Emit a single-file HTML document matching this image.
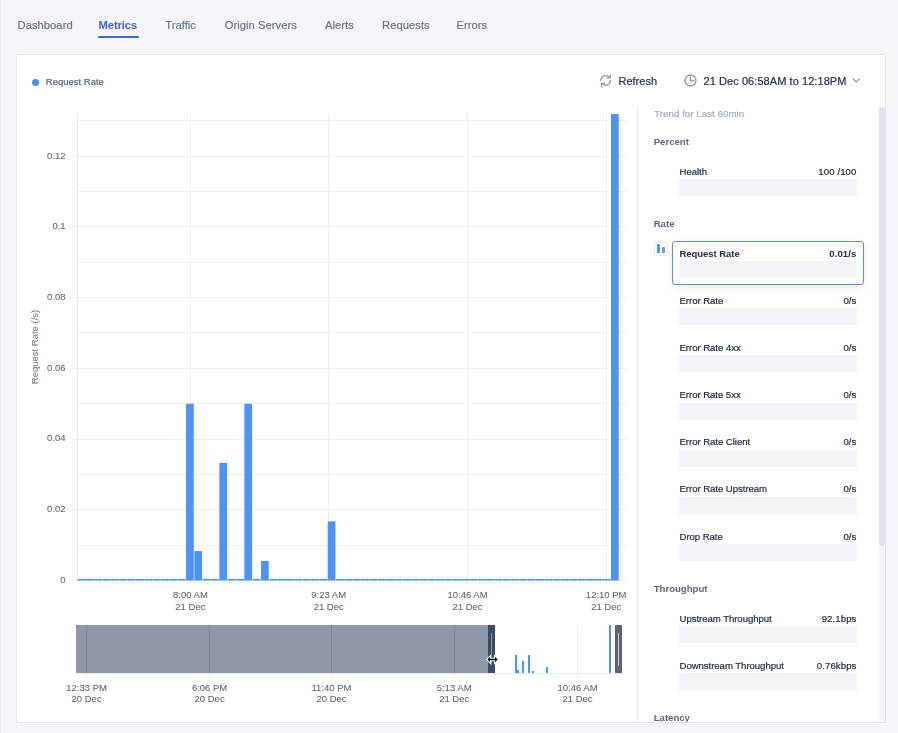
<!DOCTYPE html><html><head><meta charset="utf-8"><style>
html,body{margin:0;padding:0;width:898px;height:733px;overflow:hidden;background:#f4f6f9;font-family:"Liberation Sans", sans-serif;}
#root{position:absolute;left:0;top:0;width:898px;height:733px;will-change:transform;}
.t{position:absolute;white-space:nowrap;-webkit-font-smoothing:antialiased;}
.r{position:absolute;}
svg{position:absolute;overflow:visible;}
</style></head><body><div id="root">
<div class="r" style="left:0px;top:0px;width:1px;height:733px;background:#edf0f3;"></div>
<div class="t" style="left:17.5px;top:19.82px;font-size:11.2px;line-height:11.2px;color:#6b7386;font-weight:400;letter-spacing:0.05px;-webkit-text-stroke:0.2px #6b7386;">Dashboard</div>
<div class="t" style="left:98.6px;top:19.82px;font-size:11.2px;line-height:11.2px;color:#3d63dc;font-weight:700;letter-spacing:-0.1px;">Metrics</div>
<div class="t" style="left:165.2px;top:19.82px;font-size:11.2px;line-height:11.2px;color:#6b7386;font-weight:400;letter-spacing:0.05px;-webkit-text-stroke:0.2px #6b7386;">Traffic</div>
<div class="t" style="left:224.7px;top:19.82px;font-size:11.2px;line-height:11.2px;color:#6b7386;font-weight:400;letter-spacing:0.05px;-webkit-text-stroke:0.2px #6b7386;">Origin Servers</div>
<div class="t" style="left:325px;top:19.82px;font-size:11.2px;line-height:11.2px;color:#6b7386;font-weight:400;letter-spacing:0.05px;-webkit-text-stroke:0.2px #6b7386;">Alerts</div>
<div class="t" style="left:382.1px;top:19.82px;font-size:11.2px;line-height:11.2px;color:#6b7386;font-weight:400;letter-spacing:0.05px;-webkit-text-stroke:0.2px #6b7386;">Requests</div>
<div class="t" style="left:456.4px;top:19.82px;font-size:11.2px;line-height:11.2px;color:#6b7386;font-weight:400;letter-spacing:0.05px;-webkit-text-stroke:0.2px #6b7386;">Errors</div>
<div class="r" style="left:98px;top:36px;width:41px;height:2px;background:#3f66d8;border-radius:1px;"></div>
<div class="r" style="left:16px;top:54px;width:868px;height:667px;background:#fff;border:1px solid #e2e6ee;border-radius:2px;"></div>
<div class="r" style="left:32px;top:79px;width:7px;height:7px;border-radius:50%;background:#4a8cef;"></div>
<div class="t" style="left:45.8px;top:77.36px;font-size:9.5px;line-height:9.5px;color:#596276;font-weight:400;letter-spacing:0px;-webkit-text-stroke:0.2px #596276;">Request Rate</div>
<svg style="left:596px;top:70px" width="20" height="20" viewBox="0 0 20 20" fill="none" stroke="#8d95a8" stroke-width="1.25" stroke-linecap="round" stroke-linejoin="round"><path d="M4.7 10.4 A5 5 0 0 1 13.4 7.4"/><polyline points="14.2,5 14.2,7.9 11,7.9"/><path d="M14.5 10.5 A5 5 0 0 1 5.9 13.6"/><polyline points="5.5,16.6 5.5,13.4 8.7,13.4"/></svg>
<div class="t" style="left:618.5px;top:75.99px;font-size:11px;line-height:11px;color:#252f4b;font-weight:400;letter-spacing:0px;-webkit-text-stroke:0.2px #252f4b;">Refresh</div>
<svg style="left:680px;top:70px" width="20" height="20" viewBox="0 0 20 20" fill="none" stroke="#8a93a6" stroke-width="1.3" stroke-linecap="round" stroke-linejoin="round"><circle cx="10.5" cy="10.5" r="5.5"/><polyline points="10.4,7.3 10.4,10.5 13.7,10.5"/></svg>
<div class="t" style="left:703.5px;top:75.99px;font-size:11px;line-height:11px;color:#252f4b;font-weight:400;letter-spacing:0.07px;-webkit-text-stroke:0.2px #252f4b;">21 Dec 06:58AM to 12:18PM</div>
<svg style="left:850px;top:75px" width="12" height="10" viewBox="0 0 12 10" fill="none" stroke="#8a93a6" stroke-width="1.1" stroke-linecap="round" stroke-linejoin="round"><polyline points="3.2,4 6.2,7 9.2,4"/></svg>
<div class="r" style="left:77px;top:580px;width:549px;height:1px;background:#edeff3;"></div>
<div class="r" style="left:77px;top:545px;width:549px;height:1px;background:#edeff3;"></div>
<div class="r" style="left:77px;top:509px;width:549px;height:1px;background:#edeff3;"></div>
<div class="r" style="left:77px;top:474px;width:549px;height:1px;background:#edeff3;"></div>
<div class="r" style="left:77px;top:439px;width:549px;height:1px;background:#edeff3;"></div>
<div class="r" style="left:77px;top:403px;width:549px;height:1px;background:#edeff3;"></div>
<div class="r" style="left:77px;top:368px;width:549px;height:1px;background:#edeff3;"></div>
<div class="r" style="left:77px;top:332px;width:549px;height:1px;background:#edeff3;"></div>
<div class="r" style="left:77px;top:297px;width:549px;height:1px;background:#edeff3;"></div>
<div class="r" style="left:77px;top:262px;width:549px;height:1px;background:#edeff3;"></div>
<div class="r" style="left:77px;top:226px;width:549px;height:1px;background:#edeff3;"></div>
<div class="r" style="left:77px;top:191px;width:549px;height:1px;background:#edeff3;"></div>
<div class="r" style="left:77px;top:156px;width:549px;height:1px;background:#edeff3;"></div>
<div class="r" style="left:77px;top:120px;width:549px;height:1px;background:#edeff3;"></div>
<div class="r" style="left:72px;top:580px;width:5px;height:1px;background:#edeff3;"></div>
<div class="t" style="right:832.4px;top:574.56px;font-size:9.5px;line-height:9.5px;color:#5f6677;font-weight:400;letter-spacing:0px;-webkit-text-stroke:0.08px #5f6677;">0</div>
<div class="r" style="left:72px;top:509px;width:5px;height:1px;background:#edeff3;"></div>
<div class="t" style="right:832.4px;top:503.89px;font-size:9.5px;line-height:9.5px;color:#5f6677;font-weight:400;letter-spacing:0px;-webkit-text-stroke:0.08px #5f6677;">0.02</div>
<div class="r" style="left:72px;top:439px;width:5px;height:1px;background:#edeff3;"></div>
<div class="t" style="right:832.4px;top:433.22px;font-size:9.5px;line-height:9.5px;color:#5f6677;font-weight:400;letter-spacing:0px;-webkit-text-stroke:0.08px #5f6677;">0.04</div>
<div class="r" style="left:72px;top:368px;width:5px;height:1px;background:#edeff3;"></div>
<div class="t" style="right:832.4px;top:362.56px;font-size:9.5px;line-height:9.5px;color:#5f6677;font-weight:400;letter-spacing:0px;-webkit-text-stroke:0.08px #5f6677;">0.06</div>
<div class="r" style="left:72px;top:297px;width:5px;height:1px;background:#edeff3;"></div>
<div class="t" style="right:832.4px;top:291.89px;font-size:9.5px;line-height:9.5px;color:#5f6677;font-weight:400;letter-spacing:0px;-webkit-text-stroke:0.08px #5f6677;">0.08</div>
<div class="r" style="left:72px;top:226px;width:5px;height:1px;background:#edeff3;"></div>
<div class="t" style="right:832.4px;top:221.22px;font-size:9.5px;line-height:9.5px;color:#5f6677;font-weight:400;letter-spacing:0px;-webkit-text-stroke:0.08px #5f6677;">0.1</div>
<div class="r" style="left:72px;top:156px;width:5px;height:1px;background:#edeff3;"></div>
<div class="t" style="right:832.4px;top:150.56px;font-size:9.5px;line-height:9.5px;color:#5f6677;font-weight:400;letter-spacing:0px;-webkit-text-stroke:0.08px #5f6677;">0.12</div>
<div class="r" style="left:77px;top:114px;width:1px;height:467px;background:#e6e9ef;"></div>
<div class="r" style="left:190px;top:114px;width:1px;height:470px;background:#edeff3;"></div>
<div class="t" style="left:90.4px;width:200px;text-align:center;top:590.36px;font-size:9.5px;line-height:9.5px;color:#5f6677;font-weight:400;letter-spacing:0px;-webkit-text-stroke:0.08px #5f6677;">8:00 AM</div>
<div class="t" style="left:90.4px;width:200px;text-align:center;top:601.76px;font-size:9.5px;line-height:9.5px;color:#5f6677;font-weight:400;letter-spacing:0px;-webkit-text-stroke:0.08px #5f6677;">21 Dec</div>
<div class="r" style="left:328px;top:114px;width:1px;height:470px;background:#edeff3;"></div>
<div class="t" style="left:228.7px;width:200px;text-align:center;top:590.36px;font-size:9.5px;line-height:9.5px;color:#5f6677;font-weight:400;letter-spacing:0px;-webkit-text-stroke:0.08px #5f6677;">9:23 AM</div>
<div class="t" style="left:228.7px;width:200px;text-align:center;top:601.76px;font-size:9.5px;line-height:9.5px;color:#5f6677;font-weight:400;letter-spacing:0px;-webkit-text-stroke:0.08px #5f6677;">21 Dec</div>
<div class="r" style="left:467px;top:114px;width:1px;height:470px;background:#edeff3;"></div>
<div class="t" style="left:367.5px;width:200px;text-align:center;top:590.36px;font-size:9.5px;line-height:9.5px;color:#5f6677;font-weight:400;letter-spacing:0px;-webkit-text-stroke:0.08px #5f6677;">10:46 AM</div>
<div class="t" style="left:367.5px;width:200px;text-align:center;top:601.76px;font-size:9.5px;line-height:9.5px;color:#5f6677;font-weight:400;letter-spacing:0px;-webkit-text-stroke:0.08px #5f6677;">21 Dec</div>
<div class="r" style="left:606px;top:114px;width:1px;height:470px;background:#edeff3;"></div>
<div class="t" style="left:506.20000000000005px;width:200px;text-align:center;top:590.36px;font-size:9.5px;line-height:9.5px;color:#5f6677;font-weight:400;letter-spacing:0px;-webkit-text-stroke:0.08px #5f6677;">12:10 PM</div>
<div class="t" style="left:506.20000000000005px;width:200px;text-align:center;top:601.76px;font-size:9.5px;line-height:9.5px;color:#5f6677;font-weight:400;letter-spacing:0px;-webkit-text-stroke:0.08px #5f6677;">21 Dec</div>
<div class="t" style="left:-5.5px;top:342px;width:80px;text-align:center;font-size:9.5px;line-height:10px;color:#6b7283;transform:rotate(-90deg);transform-origin:40px 5px;">Request Rate (/s)</div>
<svg style="left:0;top:0" width="898" height="733" viewBox="0 0 898 733"><rect x="77.70" y="578.9" width="7.95" height="1.6" fill="#4d92f6"/><rect x="86.03" y="578.9" width="7.95" height="1.6" fill="#4d92f6"/><rect x="94.37" y="578.9" width="7.95" height="1.6" fill="#4d92f6"/><rect x="102.70" y="578.9" width="7.95" height="1.6" fill="#4d92f6"/><rect x="111.03" y="578.9" width="7.95" height="1.6" fill="#4d92f6"/><rect x="119.37" y="578.9" width="7.95" height="1.6" fill="#4d92f6"/><rect x="127.70" y="578.9" width="7.95" height="1.6" fill="#4d92f6"/><rect x="136.03" y="578.9" width="7.95" height="1.6" fill="#4d92f6"/><rect x="144.36" y="578.9" width="7.95" height="1.6" fill="#4d92f6"/><rect x="152.70" y="578.9" width="7.95" height="1.6" fill="#4d92f6"/><rect x="161.03" y="578.9" width="7.95" height="1.6" fill="#4d92f6"/><rect x="169.36" y="578.9" width="7.95" height="1.6" fill="#4d92f6"/><rect x="177.70" y="578.9" width="7.95" height="1.6" fill="#4d92f6"/><rect x="186.03" y="403.80" width="7.7" height="176.70" fill="#4d92f6"/><rect x="194.36" y="551.10" width="7.7" height="29.40" fill="#4d92f6"/><rect x="202.69" y="578.9" width="7.95" height="1.6" fill="#4d92f6"/><rect x="211.03" y="578.9" width="7.95" height="1.6" fill="#4d92f6"/><rect x="219.36" y="462.90" width="7.7" height="117.60" fill="#4d92f6"/><rect x="227.69" y="578.9" width="7.95" height="1.6" fill="#4d92f6"/><rect x="236.03" y="578.9" width="7.95" height="1.6" fill="#4d92f6"/><rect x="244.36" y="403.80" width="7.7" height="176.70" fill="#4d92f6"/><rect x="252.69" y="578.9" width="7.95" height="1.6" fill="#4d92f6"/><rect x="261.03" y="560.90" width="7.7" height="19.60" fill="#4d92f6"/><rect x="269.36" y="578.9" width="7.95" height="1.6" fill="#4d92f6"/><rect x="277.69" y="578.9" width="7.95" height="1.6" fill="#4d92f6"/><rect x="286.03" y="578.9" width="7.95" height="1.6" fill="#4d92f6"/><rect x="294.36" y="578.9" width="7.95" height="1.6" fill="#4d92f6"/><rect x="302.69" y="578.9" width="7.95" height="1.6" fill="#4d92f6"/><rect x="311.02" y="578.9" width="7.95" height="1.6" fill="#4d92f6"/><rect x="319.36" y="578.9" width="7.95" height="1.6" fill="#4d92f6"/><rect x="327.69" y="521.40" width="7.7" height="59.10" fill="#4d92f6"/><rect x="336.02" y="578.9" width="7.95" height="1.6" fill="#4d92f6"/><rect x="344.36" y="578.9" width="7.95" height="1.6" fill="#4d92f6"/><rect x="352.69" y="578.9" width="7.95" height="1.6" fill="#4d92f6"/><rect x="361.02" y="578.9" width="7.95" height="1.6" fill="#4d92f6"/><rect x="369.36" y="578.9" width="7.95" height="1.6" fill="#4d92f6"/><rect x="377.69" y="578.9" width="7.95" height="1.6" fill="#4d92f6"/><rect x="386.02" y="578.9" width="7.95" height="1.6" fill="#4d92f6"/><rect x="394.35" y="578.9" width="7.95" height="1.6" fill="#4d92f6"/><rect x="402.69" y="578.9" width="7.95" height="1.6" fill="#4d92f6"/><rect x="411.02" y="578.9" width="7.95" height="1.6" fill="#4d92f6"/><rect x="419.35" y="578.9" width="7.95" height="1.6" fill="#4d92f6"/><rect x="427.69" y="578.9" width="7.95" height="1.6" fill="#4d92f6"/><rect x="436.02" y="578.9" width="7.95" height="1.6" fill="#4d92f6"/><rect x="444.35" y="578.9" width="7.95" height="1.6" fill="#4d92f6"/><rect x="452.69" y="578.9" width="7.95" height="1.6" fill="#4d92f6"/><rect x="461.02" y="578.9" width="7.95" height="1.6" fill="#4d92f6"/><rect x="469.35" y="578.9" width="7.95" height="1.6" fill="#4d92f6"/><rect x="477.68" y="578.9" width="7.95" height="1.6" fill="#4d92f6"/><rect x="486.02" y="578.9" width="7.95" height="1.6" fill="#4d92f6"/><rect x="494.35" y="578.9" width="7.95" height="1.6" fill="#4d92f6"/><rect x="502.68" y="578.9" width="7.95" height="1.6" fill="#4d92f6"/><rect x="511.02" y="578.9" width="7.95" height="1.6" fill="#4d92f6"/><rect x="519.35" y="578.9" width="7.95" height="1.6" fill="#4d92f6"/><rect x="527.68" y="578.9" width="7.95" height="1.6" fill="#4d92f6"/><rect x="536.01" y="578.9" width="7.95" height="1.6" fill="#4d92f6"/><rect x="544.35" y="578.9" width="7.95" height="1.6" fill="#4d92f6"/><rect x="552.68" y="578.9" width="7.95" height="1.6" fill="#4d92f6"/><rect x="561.01" y="578.9" width="7.95" height="1.6" fill="#4d92f6"/><rect x="569.35" y="578.9" width="7.95" height="1.6" fill="#4d92f6"/><rect x="577.68" y="578.9" width="7.95" height="1.6" fill="#4d92f6"/><rect x="586.01" y="578.9" width="7.95" height="1.6" fill="#4d92f6"/><rect x="594.35" y="578.9" width="7.95" height="1.6" fill="#4d92f6"/><rect x="602.68" y="578.9" width="7.95" height="1.6" fill="#4d92f6"/><rect x="611.01" y="114.00" width="7.7" height="466.50" fill="#4d92f6"/></svg>
<div class="r" style="left:637px;top:107px;width:1px;height:615px;background:#e8ebf1;"></div>
<div class="r" style="left:86px;top:625px;width:1px;height:53px;background:#edeff3;"></div>
<div class="t" style="left:-13.400000000000006px;width:200px;text-align:center;top:683.26px;font-size:9.5px;line-height:9.5px;color:#5f6677;font-weight:400;letter-spacing:0px;-webkit-text-stroke:0.08px #5f6677;">12:33 PM</div>
<div class="t" style="left:-13.400000000000006px;width:200px;text-align:center;top:693.96px;font-size:9.5px;line-height:9.5px;color:#5f6677;font-weight:400;letter-spacing:0px;-webkit-text-stroke:0.08px #5f6677;">20 Dec</div>
<div class="r" style="left:209px;top:625px;width:1px;height:53px;background:#edeff3;"></div>
<div class="t" style="left:109.6px;width:200px;text-align:center;top:683.26px;font-size:9.5px;line-height:9.5px;color:#5f6677;font-weight:400;letter-spacing:0px;-webkit-text-stroke:0.08px #5f6677;">6:06 PM</div>
<div class="t" style="left:109.6px;width:200px;text-align:center;top:693.96px;font-size:9.5px;line-height:9.5px;color:#5f6677;font-weight:400;letter-spacing:0px;-webkit-text-stroke:0.08px #5f6677;">20 Dec</div>
<div class="r" style="left:331px;top:625px;width:1px;height:53px;background:#edeff3;"></div>
<div class="t" style="left:231.5px;width:200px;text-align:center;top:683.26px;font-size:9.5px;line-height:9.5px;color:#5f6677;font-weight:400;letter-spacing:0px;-webkit-text-stroke:0.08px #5f6677;">11:40 PM</div>
<div class="t" style="left:231.5px;width:200px;text-align:center;top:693.96px;font-size:9.5px;line-height:9.5px;color:#5f6677;font-weight:400;letter-spacing:0px;-webkit-text-stroke:0.08px #5f6677;">20 Dec</div>
<div class="r" style="left:454px;top:625px;width:1px;height:53px;background:#edeff3;"></div>
<div class="t" style="left:354.2px;width:200px;text-align:center;top:683.26px;font-size:9.5px;line-height:9.5px;color:#5f6677;font-weight:400;letter-spacing:0px;-webkit-text-stroke:0.08px #5f6677;">5:13 AM</div>
<div class="t" style="left:354.2px;width:200px;text-align:center;top:693.96px;font-size:9.5px;line-height:9.5px;color:#5f6677;font-weight:400;letter-spacing:0px;-webkit-text-stroke:0.08px #5f6677;">21 Dec</div>
<div class="r" style="left:577px;top:625px;width:1px;height:53px;background:#edeff3;"></div>
<div class="t" style="left:477.5px;width:200px;text-align:center;top:683.26px;font-size:9.5px;line-height:9.5px;color:#5f6677;font-weight:400;letter-spacing:0px;-webkit-text-stroke:0.08px #5f6677;">10:46 AM</div>
<div class="t" style="left:477.5px;width:200px;text-align:center;top:693.96px;font-size:9.5px;line-height:9.5px;color:#5f6677;font-weight:400;letter-spacing:0px;-webkit-text-stroke:0.08px #5f6677;">21 Dec</div>
<div class="r" style="left:76px;top:673px;width:546px;height:1px;background:#e6e9ef;"></div>
<div class="r" style="left:515px;top:655px;width:2px;height:18px;background:#4d92f6;"></div>
<div class="r" style="left:517px;top:670.4px;width:2px;height:2.6000000000000227px;background:#4d92f6;"></div>
<div class="r" style="left:522.1px;top:661px;width:2px;height:12px;background:#4d92f6;"></div>
<div class="r" style="left:527.9px;top:655px;width:2px;height:18px;background:#4d92f6;"></div>
<div class="r" style="left:531.5px;top:671px;width:2px;height:2px;background:#4d92f6;"></div>
<div class="r" style="left:546.2px;top:667px;width:2px;height:6px;background:#4d92f6;"></div>
<div class="r" style="left:608.9px;top:625px;width:2px;height:48px;background:#4d92f6;"></div>
<div class="r" style="left:76px;top:625px;width:412.3px;height:48px;background:rgba(120,128,146,0.82);"></div>
<div class="r" style="left:86px;top:625px;width:1px;height:48px;background:rgba(95,103,120,0.3);"></div>
<div class="r" style="left:209px;top:625px;width:1px;height:48px;background:rgba(95,103,120,0.3);"></div>
<div class="r" style="left:331px;top:625px;width:1px;height:48px;background:rgba(95,103,120,0.3);"></div>
<div class="r" style="left:454px;top:625px;width:1px;height:48px;background:rgba(95,103,120,0.3);"></div>
<div class="r" style="left:488.3px;top:625px;width:6.8px;height:48px;background:#3e4a63;"></div>
<div class="r" style="left:491.1px;top:632.8px;width:1.2px;height:32.5px;background:#9198a8;"></div>
<div class="r" style="left:615.1px;top:625px;width:6.8px;height:48px;background:#5b6477;"></div>
<div class="r" style="left:618px;top:633px;width:1px;height:32.6px;background:#c9ced8;"></div>
<svg style="left:480px;top:648px" width="24" height="24" viewBox="0 0 24 24"><path d="M7.4 11.5 L10 8.7 L10 10.7 L15 10.7 L15 8.7 L17.6 11.5 L15 14.3 L15 12.3 L10 12.3 L10 14.3 Z" fill="#000" stroke="#fff" stroke-width="2" stroke-linejoin="miter" paint-order="stroke"/></svg>
<div class="t" style="left:654.2px;top:109.20px;font-size:9.8px;line-height:9.8px;color:#a6adb9;font-weight:400;letter-spacing:0px;-webkit-text-stroke:0.2px #a6adb9;">Trend for Last 60min</div>
<div class="t" style="left:653.7px;top:137.07px;font-size:9.6px;line-height:9.6px;color:#5d6779;font-weight:700;letter-spacing:0px;">Percent</div>
<div class="t" style="left:679.5px;top:166.67px;font-size:9.6px;line-height:9.6px;color:#222b47;font-weight:400;letter-spacing:-0.05px;-webkit-text-stroke:0.2px #222b47;">Health</div>
<div class="t" style="right:41.5px;top:166.67px;font-size:9.6px;line-height:9.6px;color:#222b47;font-weight:400;letter-spacing:0.1px;-webkit-text-stroke:0.2px #222b47;">100 /100</div>
<div class="r" style="left:679px;top:179.0px;width:178px;height:17px;background:#f3f4f7;"></div>
<div class="t" style="left:653.7px;top:219.07px;font-size:9.6px;line-height:9.6px;color:#5d6779;font-weight:700;letter-spacing:0px;">Rate</div>
<div class="r" style="left:672px;top:241px;width:190px;height:42px;border:1px solid #5f8dd6;border-radius:3px;background:#fff;box-shadow:0 2px 8px rgba(30,40,70,0.09);"></div>
<div class="r" style="left:654px;top:242px;width:11.5px;height:11.5px;border:1px solid #e6e9ef;border-radius:2px;background:#fff;"></div>
<div class="r" style="left:657.1px;top:244.4px;width:3px;height:8.8px;background:#4d92f6;border-radius:0.5px;"></div>
<div class="r" style="left:662px;top:247.4px;width:3px;height:5.8px;background:#8a93a6;border-radius:0.5px;"></div>
<div class="t" style="left:679.5px;top:248.96px;font-size:9.5px;line-height:9.5px;color:#222b47;font-weight:700;letter-spacing:-0.05px;">Request Rate</div>
<div class="t" style="right:41.5px;top:248.87px;font-size:9.6px;line-height:9.6px;color:#222b47;font-weight:700;letter-spacing:0.1px;">0.01/s</div>
<div class="r" style="left:679px;top:261.2px;width:178px;height:17px;background:#f3f4f7;"></div>
<div class="t" style="left:679.5px;top:295.87px;font-size:9.6px;line-height:9.6px;color:#222b47;font-weight:400;letter-spacing:-0.05px;-webkit-text-stroke:0.2px #222b47;">Error Rate</div>
<div class="t" style="right:41.5px;top:295.87px;font-size:9.6px;line-height:9.6px;color:#222b47;font-weight:400;letter-spacing:0.1px;-webkit-text-stroke:0.2px #222b47;">0/s</div>
<div class="r" style="left:679px;top:308.2px;width:178px;height:17px;background:#f3f4f7;"></div>
<div class="t" style="left:679.5px;top:343.02px;font-size:9.6px;line-height:9.6px;color:#222b47;font-weight:400;letter-spacing:-0.05px;-webkit-text-stroke:0.2px #222b47;">Error Rate 4xx</div>
<div class="t" style="right:41.5px;top:343.02px;font-size:9.6px;line-height:9.6px;color:#222b47;font-weight:400;letter-spacing:0.1px;-webkit-text-stroke:0.2px #222b47;">0/s</div>
<div class="r" style="left:679px;top:355.34999999999997px;width:178px;height:17px;background:#f3f4f7;"></div>
<div class="t" style="left:679.5px;top:390.17px;font-size:9.6px;line-height:9.6px;color:#222b47;font-weight:400;letter-spacing:-0.05px;-webkit-text-stroke:0.2px #222b47;">Error Rate 5xx</div>
<div class="t" style="right:41.5px;top:390.17px;font-size:9.6px;line-height:9.6px;color:#222b47;font-weight:400;letter-spacing:0.1px;-webkit-text-stroke:0.2px #222b47;">0/s</div>
<div class="r" style="left:679px;top:402.5px;width:178px;height:17px;background:#f3f4f7;"></div>
<div class="t" style="left:679.5px;top:437.32px;font-size:9.6px;line-height:9.6px;color:#222b47;font-weight:400;letter-spacing:-0.05px;-webkit-text-stroke:0.2px #222b47;">Error Rate Client</div>
<div class="t" style="right:41.5px;top:437.32px;font-size:9.6px;line-height:9.6px;color:#222b47;font-weight:400;letter-spacing:0.1px;-webkit-text-stroke:0.2px #222b47;">0/s</div>
<div class="r" style="left:679px;top:449.65px;width:178px;height:17px;background:#f3f4f7;"></div>
<div class="t" style="left:679.5px;top:484.47px;font-size:9.6px;line-height:9.6px;color:#222b47;font-weight:400;letter-spacing:-0.05px;-webkit-text-stroke:0.2px #222b47;">Error Rate Upstream</div>
<div class="t" style="right:41.5px;top:484.47px;font-size:9.6px;line-height:9.6px;color:#222b47;font-weight:400;letter-spacing:0.1px;-webkit-text-stroke:0.2px #222b47;">0/s</div>
<div class="r" style="left:679px;top:496.8px;width:178px;height:17px;background:#f3f4f7;"></div>
<div class="t" style="left:679.5px;top:531.62px;font-size:9.6px;line-height:9.6px;color:#222b47;font-weight:400;letter-spacing:-0.05px;-webkit-text-stroke:0.2px #222b47;">Drop Rate</div>
<div class="t" style="right:41.5px;top:531.62px;font-size:9.6px;line-height:9.6px;color:#222b47;font-weight:400;letter-spacing:0.1px;-webkit-text-stroke:0.2px #222b47;">0/s</div>
<div class="r" style="left:679px;top:543.95px;width:178px;height:17px;background:#f3f4f7;"></div>
<div class="t" style="left:653.7px;top:583.87px;font-size:9.6px;line-height:9.6px;color:#5d6779;font-weight:700;letter-spacing:0px;">Throughput</div>
<div class="t" style="left:679.5px;top:613.57px;font-size:9.6px;line-height:9.6px;color:#222b47;font-weight:400;letter-spacing:-0.05px;-webkit-text-stroke:0.2px #222b47;">Upstream Throughput</div>
<div class="t" style="right:41.5px;top:613.57px;font-size:9.6px;line-height:9.6px;color:#222b47;font-weight:400;letter-spacing:0.1px;-webkit-text-stroke:0.2px #222b47;">92.1bps</div>
<div class="r" style="left:679px;top:625.9000000000001px;width:178px;height:17px;background:#f3f4f7;"></div>
<div class="t" style="left:679.5px;top:660.57px;font-size:9.6px;line-height:9.6px;color:#222b47;font-weight:400;letter-spacing:-0.05px;-webkit-text-stroke:0.2px #222b47;">Downstream Throughput</div>
<div class="t" style="right:41.5px;top:660.57px;font-size:9.6px;line-height:9.6px;color:#222b47;font-weight:400;letter-spacing:0.1px;-webkit-text-stroke:0.2px #222b47;">0.76kbps</div>
<div class="r" style="left:679px;top:672.9000000000001px;width:178px;height:17px;background:#f3f4f7;"></div>
<div class="t" style="left:653.7px;top:712.57px;font-size:9.6px;line-height:9.6px;color:#5d6779;font-weight:700;letter-spacing:0px;">Latency</div>
<div class="r" style="left:879px;top:107.5px;width:6px;height:614px;background:#f5f6f9;"></div>
<div class="r" style="left:879px;top:107px;width:6px;height:439px;background:#dfe3ee;border-radius:3px 3px 3px 3px;"></div>
<div class="r" style="left:16px;top:722px;width:870px;height:11px;background:#f4f6f9;border-top:1px solid #e2e6ee;box-sizing:border-box;"></div>
</div></body></html>
